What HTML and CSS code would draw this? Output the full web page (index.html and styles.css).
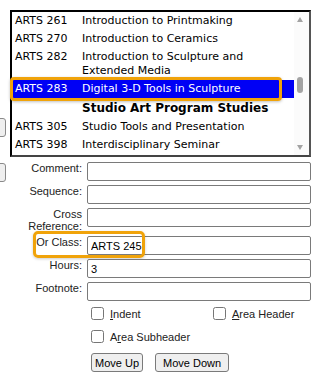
FILE: index.html
```html
<!DOCTYPE html>
<html lang="en">
<head>
    <meta charset="UTF-8">
    <meta name="viewport" content="width=device-width, initial-scale=1.0">
    <title>Program Item Editor</title>
    <link rel="stylesheet" href="styles.css">
</head>
<body>
    <div class="page">
        <div class="side">
            <button class="side-btn" aria-label="Add"></button>
            <button class="side-btn" aria-label="Remove"></button>
        </div>

        <div class="main">
            <div class="listbox">
                <div class="options">
                    <div class="opt"><span>ARTS 261</span><span>Introduction to Printmaking</span></div>
                    <div class="opt"><span>ARTS 270</span><span>Introduction to Ceramics</span></div>
                    <div class="opt"><span>ARTS 282</span><span>Introduction to Sculpture and Extended Media</span></div>
                    <div class="opt selected"><span>ARTS 283</span><span>Digital 3-D Tools in Sculpture</span><i class="callout"></i></div>
                    <div class="opt head"><span></span><span>Studio Art Program Studies</span></div>
                    <div class="opt"><span>ARTS 305</span><span>Studio Tools and Presentation</span></div>
                    <div class="opt"><span>ARTS 398</span><span>Interdisciplinary Seminar</span></div>
                </div>
                <div class="scrollbar">
                    <span class="arrow up"></span>
                    <span class="thumb"></span>
                    <span class="arrow down"></span>
                </div>
            </div>

            <div class="form">
                <div class="row">
                    <label class="lbl">Comment:</label>
                    <input class="field" type="text">
                </div>
                <div class="row">
                    <label class="lbl">Sequence:</label>
                    <input class="field" type="text">
                </div>
                <div class="row">
                    <label class="lbl">Cross<br>Reference:</label>
                    <input class="field" type="text">
                </div>
                <div class="row">
                    <label class="lbl">Or Class:</label>
                    <input class="field" type="text" value="ARTS 245">
                    <i class="callout-class"></i>
                </div>
                <div class="row">
                    <label class="lbl">Hours:</label>
                    <input class="field" type="text" value="3">
                </div>
                <div class="row">
                    <label class="lbl">Footnote:</label>
                    <input class="field" type="text">
                </div>

                <div class="checks">
                    <label class="check"><input type="checkbox"><span><u>I</u>ndent</span></label>
                    <label class="check"><input type="checkbox"><span><u>A</u>rea Header</span></label>
                    <label class="check"><input type="checkbox"><span>A<u>r</u>ea Subheader</span></label>
                </div>

                <div class="buttons">
                    <button class="btn">Move Up</button>
                    <button class="btn wide">Move Down</button>
                </div>
            </div>
        </div>
    </div>
</body>
</html>
```

FILE: styles.css
```css
body {
    margin: 0;
    background: #fff;
    font-family: "Liberation Sans", Arial, sans-serif;
    font-size: 11px;
    color: #000;
}
.page {
    display: flex;
    width: 317px;
    height: 392px;
    overflow: hidden;
}
.side {
    width: 6px;
    flex: none;
    overflow: hidden;
    display: flex;
    flex-direction: column;
    align-items: flex-end;
    padding-top: 118px;
    gap: 26px;
}
.side-btn {
    flex: none;
    width: 60px;
    height: 19px;
    background: #efefef;
    border: 1px solid #8a8a8a;
    border-radius: 3px;
}
.main {
    flex: 1;
    padding-top: 10px;
}
.listbox {
    margin-left: 4px;
    width: 301px;
    height: 147px;
    box-sizing: border-box;
    border: 2px solid #000;
    border-right-color: #555;
    border-bottom-color: #444;
    display: flex;
    font-family: "DejaVu Sans", Verdana, sans-serif;
    font-size: 11px;
}
.options {
    width: 282px;
    flex: none;
}
.opt {
    position: relative;
    display: grid;
    grid-template-columns: 67px 1fr;
    padding: 2px 0 2px 3px;
    line-height: 14px;
}
.opt.selected {
    background: #0000f5;
    color: #fff;
}
.opt.head {
    font-weight: bold;
    font-size: 12px;
    line-height: 16px;
}
.callout {
    position: absolute;
    left: -2px;
    top: -3px;
    bottom: -3px;
    width: 272px;
    box-sizing: border-box;
    border: 3px solid #f0a30a;
    border-radius: 4px;
    box-shadow: 0 1px 3px rgba(0, 0, 0, 0.25);
}
.scrollbar {
    flex: 1;
    display: flex;
    flex-direction: column;
    align-items: flex-start;
    padding-left: 3px;
    background: #fbfbfb;
}
.arrow {
    width: 0;
    height: 0;
    border-left: 3.5px solid transparent;
    border-right: 3.5px solid transparent;
}
.arrow.up {
    margin-top: 5px;
    border-bottom: 5px solid #a3a3a3;
}
.arrow.down {
    margin-top: 52px;
    border-top: 5px solid #a3a3a3;
}
.thumb {
    margin-top: 55px;
    width: 6px;
    height: 16px;
    background: #a3a3a3;
    border-radius: 3px;
}
.form {
    padding-top: 5px;
}
.row {
    position: relative;
    display: flex;
    align-items: flex-start;
    margin-bottom: 4px;
}
.lbl {
    width: 76px;
    text-align: right;
    line-height: 12px;
    color: #222;
}
.field {
    margin: 0 0 0 5px;
    width: 224px;
    height: 19px;
    box-sizing: border-box;
    border: 1px solid #7a7a7a;
    border-radius: 2px;
    padding: 0 3px;
    font-family: "Liberation Sans", Arial, sans-serif;
    font-size: 11px;
    color: #000;
    outline: none;
}
.callout-class {
    position: absolute;
    left: 27px;
    top: -5px;
    width: 112px;
    height: 27px;
    box-sizing: border-box;
    border: 3px solid #f0a30a;
    border-radius: 5px;
    box-shadow: 0 1px 3px rgba(0, 0, 0, 0.2);
}
.checks {
    margin: 6px 0 0 85px;
    display: grid;
    grid-template-columns: 122px auto;
    row-gap: 10px;
}
.check {
    display: flex;
    align-items: center;
    gap: 6px;
    height: 13px;
    color: #222;
}
.check input {
    margin: 0;
    width: 13px;
    height: 13px;
}
.buttons {
    margin: 10px 0 0 85px;
    display: flex;
    gap: 12px;
}
.btn {
    height: 19px;
    padding: 0 3px;
    background: #efefef;
    border: 1px solid #7a7a7a;
    border-radius: 3px;
    font-family: "Liberation Sans", Arial, sans-serif;
    font-size: 11px;
    color: #000;
}
.btn.wide {
    padding: 0 7px;
}
```
